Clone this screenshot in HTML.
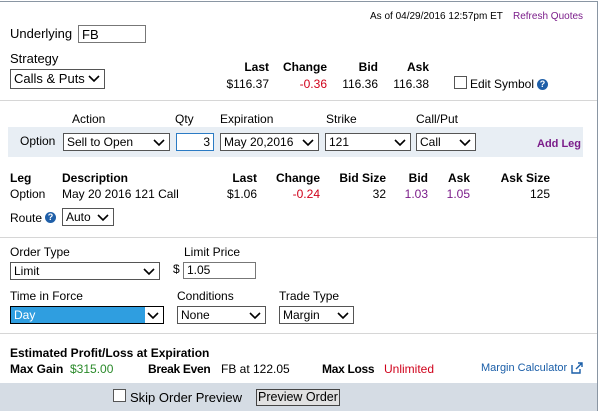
<!DOCTYPE html>
<html><head><style>
*{margin:0;padding:0;box-sizing:border-box}
body{width:600px;height:411px;background:#fff;font-family:"Liberation Sans",Arial,sans-serif;font-size:12px;color:#000;position:relative;overflow:hidden}
.a{position:absolute;white-space:nowrap}
.sel{position:absolute;border:1px solid #555;background:#fff;font-size:12px;padding:1px 0 0 3px;height:18px}
.sel svg{position:absolute;right:4px;top:5px}
.inp{position:absolute;border:1px solid #777;background:#fff;font-size:12px;padding:1px 3px;height:18px}
.b{font-weight:bold}
.r{text-align:right}
.red{color:#d0021b}.pur{color:#7b1d8a}
.hl{position:absolute;left:0;width:597px;height:1px;background:#d6d6d6}
.cb{position:absolute;width:13px;height:13px;border:1px solid #555;background:#fff}
.q{position:absolute;width:11px;height:11px;border-radius:50%;background:#1f5fa8;color:#fff;font-size:9px;font-weight:bold;text-align:center;line-height:11px}
</style></head><body>
<div style="position:absolute;left:0;top:1px;width:597px;height:1px;background:#8a96a3"></div>
<div style="position:absolute;left:597px;top:1px;width:1px;height:410px;background:#8a96a3"></div>
<div class="a" style="left:370px;top:11px;font-size:10px">As of 04/29/2016 12:57pm ET</div>
<div class="a pur" style="left:513px;top:11px;font-size:10px">Refresh Quotes</div>
<div class="a" style="left:10px;top:26px;font-size:13px">Underlying</div>
<div class="inp" style="left:78px;top:25px;width:68px;font-size:13px">FB</div>
<div class="a" style="left:10px;top:51px;font-size:13px">Strategy</div>
<div class="sel" style="left:10px;top:69px;width:95px;height:20px;font-size:13px">Calls &amp; Puts<svg width="12" height="8"><path d="M1 1l5 5 5-5" stroke="#000" stroke-width="1.6" fill="none"/></svg></div>
<div class="a b r" style="left:200px;top:60px;width:69px">Last</div>
<div class="a b r" style="left:280px;top:60px;width:47px">Change</div>
<div class="a b r" style="left:340px;top:60px;width:38px">Bid</div>
<div class="a b r" style="left:390px;top:60px;width:39px">Ask</div>
<div class="a r" style="left:200px;top:77px;width:69px">$116.37</div>
<div class="a red r" style="left:280px;top:77px;width:47px">-0.36</div>
<div class="a r" style="left:330px;top:77px;width:48px">116.36</div>
<div class="a r" style="left:380px;top:77px;width:49px">116.38</div>
<div class="cb" style="left:454px;top:76px"></div>
<div class="a" style="left:470px;top:77px">Edit Symbol</div>
<div class="q" style="left:537px;top:79px">?</div>
<div class="hl" style="top:100px"></div>
<div class="a" style="left:72px;top:112px">Action</div>
<div class="a" style="left:175px;top:112px">Qty</div>
<div class="a" style="left:220px;top:112px">Expiration</div>
<div class="a" style="left:326px;top:112px">Strike</div>
<div class="a" style="left:416px;top:112px">Call/Put</div>
<div style="position:absolute;left:8px;top:127px;width:575px;height:30px;background:#e8eef4"></div>
<div class="a" style="left:20px;top:134px">Option</div>
<div class="sel" style="left:63px;top:133px;width:107px">Sell to Open<svg width="12" height="8"><path d="M1 1l5 5 5-5" stroke="#000" stroke-width="1.6" fill="none"/></svg></div>
<div class="inp" style="left:176px;top:133px;width:38px;text-align:right;border-color:#2b7bc4">3</div>
<div class="sel" style="left:220px;top:133px;width:99px">May 20,2016<svg width="12" height="8"><path d="M1 1l5 5 5-5" stroke="#000" stroke-width="1.6" fill="none"/></svg></div>
<div class="sel" style="left:325px;top:133px;width:86px">121<svg width="12" height="8"><path d="M1 1l5 5 5-5" stroke="#000" stroke-width="1.6" fill="none"/></svg></div>
<div class="sel" style="left:416px;top:133px;width:60px">Call<svg width="12" height="8"><path d="M1 1l5 5 5-5" stroke="#000" stroke-width="1.6" fill="none"/></svg></div>
<div class="a b pur" style="left:537px;top:138px;font-size:11px">Add Leg</div>
<div class="a b" style="left:10px;top:171px">Leg</div>
<div class="a b" style="left:62px;top:171px">Description</div>
<div class="a b r" style="left:200px;top:171px;width:57px">Last</div>
<div class="a b r" style="left:260px;top:171px;width:60px">Change</div>
<div class="a b r" style="left:326px;top:171px;width:60px">Bid Size</div>
<div class="a b r" style="left:390px;top:171px;width:38px">Bid</div>
<div class="a b r" style="left:430px;top:171px;width:40px">Ask</div>
<div class="a b r" style="left:480px;top:171px;width:70px">Ask Size</div>
<div class="a" style="left:10px;top:187px">Option</div>
<div class="a" style="left:62px;top:187px">May 20 2016 121 Call</div>
<div class="a r" style="left:200px;top:187px;width:57px">$1.06</div>
<div class="a red r" style="left:260px;top:187px;width:60px">-0.24</div>
<div class="a r" style="left:326px;top:187px;width:60px">32</div>
<div class="a pur r" style="left:390px;top:187px;width:38px">1.03</div>
<div class="a pur r" style="left:430px;top:187px;width:40px">1.05</div>
<div class="a r" style="left:480px;top:187px;width:70px">125</div>
<div class="a" style="left:10px;top:211px">Route</div>
<div class="q" style="left:45px;top:212px">?</div>
<div class="sel" style="left:62px;top:208px;width:52px">Auto<svg width="12" height="8"><path d="M1 1l5 5 5-5" stroke="#000" stroke-width="1.6" fill="none"/></svg></div>
<div class="hl" style="top:237px"></div>
<div class="a" style="left:10px;top:245px">Order Type</div>
<div class="a" style="left:184px;top:245px">Limit Price</div>
<div class="sel" style="left:10px;top:262px;width:150px">Limit<svg width="12" height="8"><path d="M1 1l5 5 5-5" stroke="#000" stroke-width="1.6" fill="none"/></svg></div>
<div class="a" style="left:173px;top:262px">$</div>
<div class="inp" style="left:183px;top:262px;width:73px;height:17px;padding-top:0">1.05</div>
<div class="a" style="left:10px;top:289px">Time in Force</div>
<div class="a" style="left:177px;top:289px">Conditions</div>
<div class="a" style="left:279px;top:289px">Trade Type</div>
<div class="sel" style="left:10px;top:306px;width:154px;border-color:#000;background:linear-gradient(to right,#2f9ee0 0,#2f9ee0 134px,#fff 134px);color:#fff">Day<svg width="12" height="8"><path d="M1 1l5 5 5-5" stroke="#000" stroke-width="1.6" fill="none"/></svg></div>
<div class="sel" style="left:177px;top:306px;width:89px">None<svg width="12" height="8"><path d="M1 1l5 5 5-5" stroke="#000" stroke-width="1.6" fill="none"/></svg></div>
<div class="sel" style="left:279px;top:306px;width:75px">Margin<svg width="12" height="8"><path d="M1 1l5 5 5-5" stroke="#000" stroke-width="1.6" fill="none"/></svg></div>
<div class="hl" style="top:333px"></div>
<div class="a b" style="left:10px;top:346px">Estimated Profit/Loss at Expiration</div>
<div class="a b" style="left:10px;top:362px">Max Gain</div>
<div class="a" style="left:70px;top:362px;color:#2a8a2a">$315.00</div>
<div class="a b" style="left:148px;top:362px;font-size:12px;letter-spacing:-0.3px">Break Even</div>
<div class="a" style="left:221px;top:362px">FB at 122.05</div>
<div class="a b" style="left:322px;top:362px;letter-spacing:-0.3px">Max Loss</div>
<div class="a red" style="left:384px;top:362px">Unlimited</div>
<div class="a" style="left:481px;top:362px;font-size:11px;color:#1a5ea8">Margin Calculator</div>
<svg class="a" style="left:571px;top:362px" width="12" height="12"><path d="M1 3v8h8V7M5 7l6-6M7 1h4v4" stroke="#1a5ea8" stroke-width="1.4" fill="none"/></svg>
<div style="position:absolute;left:0;top:383px;width:597px;height:28px;background:#d5dce4"></div>
<div class="cb" style="left:113px;top:389px"></div>
<div class="a" style="left:130px;top:390px;font-size:13px">Skip Order Preview</div>
<div class="a" style="left:256px;top:389px;width:84px;height:17px;border:1px solid #444;background:#e1e1e1;padding-left:1px;line-height:15px;font-size:12.5px">Preview Order</div>
</body></html>
